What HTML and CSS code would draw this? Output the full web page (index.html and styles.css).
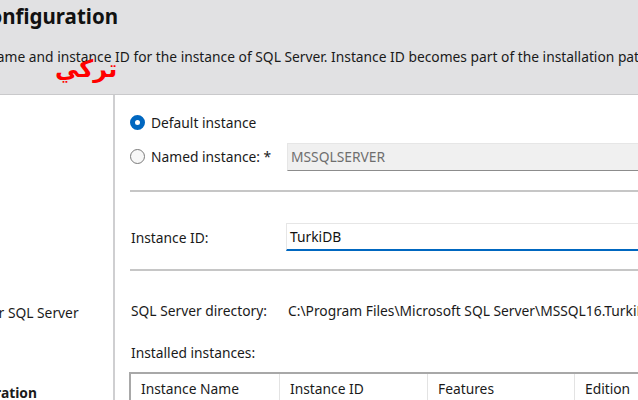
FILE: index.html
```html
<!DOCTYPE html>
<html>
<head>
<meta charset="utf-8">
<link rel="stylesheet" href="styles.css">
</head>
<body>
<div class="window">
  <header class="header">
    <h1 class="title">Instance Configuration</h1>
    <p class="subtitle">Specify the name and instance ID for the instance of SQL Server. Instance ID becomes part of the installation path.</p>
    <span class="watermark" lang="ar" dir="rtl">تركي</span>
  </header>
  <div class="main">
    <nav class="nav">
      <div class="nav-item">Azure Extension for SQL Server</div>
      <div class="nav-item">Feature Selection</div>
      <div class="nav-item">Feature Rules</div>
      <div class="nav-item active">Instance Configuration</div>
    </nav>
    <section class="content">
      <div class="row radio-row first">
        <span class="radio checked"></span>
        <span class="label">Default instance</span>
      </div>
      <div class="row radio-row named">
        <span class="radio"></span>
        <span class="label named-label">Named instance: *</span>
        <div class="input disabled">MSSQLSERVER</div>
      </div>
      <hr class="sep sep1">
      <div class="row field-row">
        <span class="field-label">Instance ID:</span>
        <div class="input focused">TurkiDB</div>
      </div>
      <hr class="sep sep2">
      <div class="row dir-row">
        <span class="field-label dir-label">SQL Server directory:</span>
        <span class="dir-value">C:\Program Files\Microsoft SQL Server\MSSQL16.TurkiDB</span>
      </div>
      <div class="row installed">Installed instances:</div>
      <div class="table">
        <div class="th c1">Instance Name</div>
        <div class="th c2">Instance ID</div>
        <div class="th c3">Features</div>
        <div class="th c4">Edition</div>
        <div class="th c5">Version</div>
      </div>
    </section>
  </div>
</div>
</body>
</html>
```
FILE: styles.css
```css
* { box-sizing: border-box; }
html, body { margin: 0; padding: 0; }
body {
  width: 638px;
  height: 400px;
  overflow: hidden;
  background: #ffffff;
  font-family: "Noto Sans", "Open Sans", sans-serif;
  font-size: 13.8px;
  color: #1a1a1a;
}
.window { width: 638px; height: 400px; overflow: hidden; display: flex; flex-direction: column; }
.header {
  position: relative;
  height: 95px;
  flex: none;
  background: #e1e1e3;
  border-bottom: 1px solid #c9c9cb;
  overflow: hidden;
}
.title {
  margin: 0 0 0 -118px;
  padding-top: 3px;
  font-size: 20.5px;
  font-weight: 700;
  line-height: 26px;
  white-space: nowrap;
  color: #111;
}
.subtitle {
  margin: 19px 0 0 -86px;
  font-size: 13.8px;
  line-height: 18px;
  white-space: nowrap;
  color: #1a1a1a;
}
.watermark {
  position: absolute;
  left: 55px;
  top: 53px;
  color: #ff0000;
  font-family: "DejaVu Sans", sans-serif;
  font-weight: 700;
  font-size: 24px;
  line-height: 32px;
}
.main { flex: 1; display: flex; min-height: 0; }
.nav {
  width: 115px;
  flex: none;
  border-right: 2px solid #cfcfd1;
  display: flex;
  flex-direction: column;
  padding-top: 205px;
  overflow: hidden;
}
.nav-item {
  height: 26.7px;
  line-height: 26.7px;
  white-space: nowrap;
  margin-left: -122px;
}
.nav-item.active { font-weight: 700; }
.content {
  flex: 1;
  display: flex;
  flex-direction: column;
  padding-left: 15px;
  min-width: 0;
  overflow: hidden;
}
.row { display: flex; align-items: center; white-space: nowrap; flex: none; }
.radio-row.first { margin-top: 17px; height: 20px; }
.radio-row.named { margin-top: 10px; height: 29px; }
.radio {
  width: 15px;
  height: 15px;
  border-radius: 50%;
  border: 1px solid #7a7a7a;
  background: #f7f7f7;
  flex: none;
  margin-left: 0;
  margin-right: 6px;
}
.radio.checked {
  border: 5px solid #0067c0;
  background: #ffffff;
}
.named-label { width: 136px; flex: none; }
.input {
  flex: none;
  width: 400px;
  height: 28px;
  padding-left: 3px;
  display: flex;
  align-items: center;
  border: 1px solid #e6e6e6;
}
.input.disabled {
  background: #f0f0f0;
  border-bottom: 1px solid #8c8c8c;
  color: #6e6e6e;
}
.input.focused {
  background: #ffffff;
  border-bottom: 2px solid #0067c0;
  color: #111;
}
.sep {
  margin: 0;
  border: none;
  border-top: 2px solid #c6c6c6;
  flex: none;
}
.sep1 { margin-top: 19px; }
.field-row { margin-top: 31px; height: 28px; }
.field-label { width: 156px; flex: none; padding-left: 1px; }
.sep2 { margin-top: 18px; }
.dir-row { margin-top: 30px; height: 18px; }
.dir-label { width: 158px; }
.installed { margin-top: 24px; height: 18px; padding-left: 1px; }
.table {
  margin-top: 11px;
  margin-left: -1px;
  display: flex;
  border-top: 2px solid #a8a8a8;
  border-left: 2px solid #a8a8a8;
  height: 30px;
  flex: none;
}
.th {
  flex: none;
  padding-left: 10px;
  padding-top: 5px;
  border-right: 1px solid #e3e3e3;
  white-space: nowrap;
}
.c1 { width: 149px; }
.c2 { width: 148px; }
.c3 { width: 147px; }
.c4 { width: 120px; }
.c5 { width: 100px; }
```
